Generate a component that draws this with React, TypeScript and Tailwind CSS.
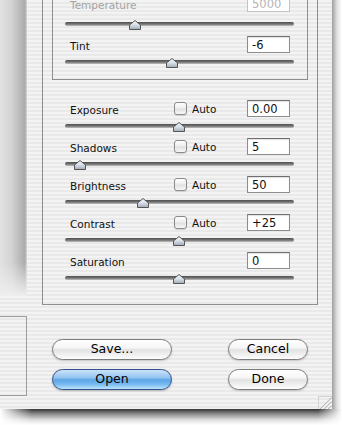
import React from "react";

function Thumb({ x }: { x: number }) {
  return (
    <svg className="absolute top-[1px]" style={{ left: x - 6 }} width="12" height="10" viewBox="0 0 12 10">
      <defs>
        <linearGradient id="thumbgrad" x1="0" y1="0" x2="0" y2="1">
          <stop offset="0" stopColor="#f6f8fb" />
          <stop offset="0.45" stopColor="#dde3ea" />
          <stop offset="1" stopColor="#9eabbb" />
        </linearGradient>
      </defs>
      <path d="M6 0.5 L11.5 5 L11.5 9.5 L0.5 9.5 L0.5 5 Z" fill="url(#thumbgrad)" stroke="#555" strokeWidth="1" strokeLinejoin="round" />
    </svg>
  );
}

function Slider({ pos, raised }: { pos: number; raised?: boolean }) {
  return (
    <div className={raised ? "relative h-[11px] mt-[7px]" : "relative h-[11px] mt-[4px]"}>
      <div className="absolute left-0 right-0 top-[3px] h-[4px] rounded-full bg-[image:linear-gradient(to_bottom,#4e4e4e,#777777_55%,#c2c2c2)]" />
      <Thumb x={pos} />
    </div>
  );
}

function Row({
  label,
  value,
  auto,
  pos,
  disabled,
}: {
  label: string;
  value: string;
  auto?: boolean;
  pos: number;
  disabled?: boolean;
}) {
  return (
    <div className={disabled ? "h-[41px] -mt-[3px] flex flex-col" : "h-[38px] flex flex-col"}>
      <div className="flex items-start h-[17px]">
        <div
          className={
            disabled
              ? "w-[109px] pl-[5px] pt-[4px] text-[10.5px] leading-[13px] text-[#a3a3a3]"
              : "w-[109px] pl-[5px] pt-[4px] text-[10.5px] leading-[13px] text-[#111111]"
          }
        >
          {label}
        </div>
        {auto && (
          <>
            <div className="mt-[2px] w-[13px] h-[13px] rounded-[3px] border border-[#8a8a8a] bg-[image:linear-gradient(to_bottom,#ffffff,#eeeeee_45%,#e0e0e0_55%,#f8f8f8)] shadow-[0_1px_1px_rgba(0,0,0,0.12)]" />
            <div className="ml-[5px] pt-[3px] text-[10.5px] leading-[13px] text-[#111111]">Auto</div>
          </>
        )}
        <div
          className={
            disabled
              ? "ml-auto mr-[4px] w-[43px] h-[17px] border border-[#c4c4c4] bg-white pl-[4px] pt-[1px] text-[11.5px] leading-[15px] text-[#b4b4b4]"
              : "ml-auto mr-[4px] w-[43px] h-[17px] border border-[#8c8c8c] border-t-[#6f6f6f] bg-white shadow-[inset_0_1px_1px_rgba(0,0,0,0.12)] pl-[4px] pt-[1px] text-[11.5px] leading-[15px] text-[#111111]"
          }
        >
          {value}
        </div>
      </div>
      <Slider pos={pos} raised={disabled} />
    </div>
  );
}

function AquaButton({ label, width, primary }: { label: string; width: string; primary?: boolean }) {
  return (
    <div
      className={
        primary
          ? `${width} h-[21px] rounded-full border border-[#34508a] bg-[image:linear-gradient(to_bottom,#cbe2f9_0%,#94c5f0_40%,#5ea5e6_52%,#76baf1_75%,#bce5ff_100%)] shadow-[0_1px_2px_rgba(0,0,0,0.25)] flex items-center justify-center text-[12.5px] text-black`
          : `${width} h-[21px] rounded-full border border-[#7c7c7c] bg-[image:linear-gradient(to_bottom,#ffffff_0%,#f6f6f6_40%,#e2e2e2_52%,#efefef_75%,#fdfdfd_100%)] shadow-[0_1px_2px_rgba(0,0,0,0.2)] flex items-center justify-center text-[12.5px] text-black`
      }
    >
      {label}
    </div>
  );
}

export default function App() {
  return (
    <div className="w-[342px] h-[425px] bg-white overflow-hidden flex flex-col font-[family-name:'DejaVu_Sans',sans-serif]">
      <div className="flex h-[409px]">
        {/* window */}
        <div className="w-[332px] h-[409px] flex bg-[image:repeating-linear-gradient(to_bottom,#f3f3f3_0px,#f3f3f3_2px,#e9e9e9_2px,#e9e9e9_4px)]">
          {/* left column */}
          <div className="w-[27px] flex flex-col">
            <div className="h-[296px] bg-[image:linear-gradient(to_bottom,rgba(238,238,238,0)_262px,#eeeeee_296px),linear-gradient(to_right,#e2e2e2,#d2d2d2_12px,#b4b4b4_22px,#a9a9a9_25px,#c8c8c8_26px,#cfcfcf_27px)]" />
            <div className="mt-[20px] h-[80px] border-t border-r border-b border-[#9c9c9c]" />
          </div>

          {/* main column */}
          <div className="ml-[15px] w-[276px] flex flex-col">
            <div className="h-[305px] border-x border-b border-[#8e8e8e] flex flex-col">
              <div className="mx-[9px] h-[80px] border-x border-b border-[#8e8e8e] pl-[12px] pr-[13px] flex flex-col">
                <div className="-mt-[2px] flex flex-col">
                  <Row label="Temperature" value="5000" pos={70} disabled />
                  <Row label="Tint" value="-6" pos={107} />
                </div>
              </div>
              <div className="mt-[20px] pl-[22px] pr-[23px] flex flex-col">
                <Row label="Exposure" value="0.00" auto pos={114} />
                <Row label="Shadows" value="5" auto pos={15} />
                <Row label="Brightness" value="50" auto pos={78} />
                <Row label="Contrast" value="+25" auto pos={114} />
                <Row label="Saturation" value="0" pos={114} />
              </div>
            </div>

            <div className="mt-[34px] px-[10px] flex justify-between">
              <AquaButton label="Save..." width="w-[120px]" />
              <AquaButton label="Cancel" width="w-[80px]" />
            </div>
            <div className="mt-[9px] px-[10px] flex justify-between">
              <AquaButton label="Open" width="w-[120px]" primary />
              <AquaButton label="Done" width="w-[80px]" />
            </div>
          </div>

          {/* right column with resize grip */}
          <div className="w-[14px] flex flex-col justify-end">
            <div className="h-[13px] border-l border-t border-[#d2d2d2]">
              <svg width="13" height="12" viewBox="0 0 13 12">
                <path d="M1.5 12 L13 0.5 M5.5 12 L13 4.5 M9.5 12 L13 8.5" stroke="#8a8a8a" strokeWidth="1" />
                <path d="M2.5 12 L13 1.5 M6.5 12 L13 5.5 M10.5 12 L13 9.5" stroke="#ffffff" strokeWidth="1" />
              </svg>
            </div>
          </div>
        </div>
        {/* right shadow */}
        <div className="w-[10px] bg-[image:linear-gradient(to_right,rgba(0,0,0,0.38),rgba(0,0,0,0.12)_5px,rgba(0,0,0,0))]" />
      </div>
      {/* bottom shadow */}
      <div className="h-[16px] bg-[image:linear-gradient(to_right,#ffffff_0px,rgba(255,255,255,0)_32px,rgba(255,255,255,0)_318px,#ffffff_342px),linear-gradient(to_bottom,rgba(0,0,0,0.8),rgba(0,0,0,0.45)_5px,rgba(0,0,0,0.12)_11px,rgba(0,0,0,0))]" />
    </div>
  );
}
